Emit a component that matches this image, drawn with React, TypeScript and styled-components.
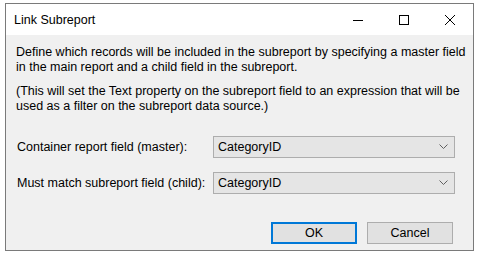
import React from 'react';
import styled, { createGlobalStyle } from 'styled-components';

const GlobalStyle = createGlobalStyle`
  html, body {
    margin: 0;
    padding: 0;
    background: #ffffff;
    font-family: 'Liberation Sans', Arial, sans-serif;
    font-size: 12.5px;
    color: #000000;
  }
`;

const Screen = styled.div`
  width: 479px;
  height: 256px;
  padding: 3px 0 0 5px;
  box-sizing: border-box;
  overflow: hidden;
`;

const Window = styled.div`
  width: 469px;
  height: 248px;
  box-sizing: border-box;
  border: 1px solid #7a7a7a;
  display: flex;
  flex-direction: column;
  background: #f0f0f0;
`;

const TitleBar = styled.div`
  height: 31px;
  background: #ffffff;
  display: flex;
  align-items: center;
  flex-shrink: 0;
`;

const Title = styled.div`
  flex: 1;
  padding-left: 8px;
`;

const CaptionButton = styled.div`
  width: 46px;
  height: 31px;
  display: flex;
  align-items: center;
  justify-content: center;
`;

const Body = styled.div`
  flex: 1;
  padding: 10px 10px 0 10px;
  display: flex;
  flex-direction: column;
`;

const Paragraph = styled.p`
  margin: 0 0 9px 0;
  line-height: 15px;
  white-space: nowrap;
`;

const FieldGrid = styled.div`
  margin-top: 13px;
  display: grid;
  grid-template-columns: 197px 242px;
  row-gap: 14px;
  align-items: center;
`;

const Label = styled.div`
  padding-left: 1px;
`;

const Combo = styled.div`
  height: 22px;
  box-sizing: border-box;
  border: 1px solid #adadad;
  background: #e5e5e5;
  display: flex;
  align-items: center;
  justify-content: space-between;
  padding: 0 6px 0 4px;
`;

const Footer = styled.div`
  margin-top: 28px;
  display: flex;
  justify-content: flex-end;
  gap: 10px;
  padding-right: 10px;
`;

const Button = styled.button<{ $default?: boolean }>`
  width: 86px;
  height: 22px;
  box-sizing: border-box;
  font: inherit;
  color: #000000;
  background: #e1e1e1;
  border: ${(p) => (p.$default ? '2px solid #0078d7' : '1px solid #adadad')};
  padding: 0;
`;

const Chevron = () => (
  <svg width="9" height="6" viewBox="0 0 9 6">
    <path d="M0.5 0.5 L4.5 4.5 L8.5 0.5" fill="none" stroke="#606060" strokeWidth="1" />
  </svg>
);

const App: React.FC = () => {
  return (
    <Screen>
      <GlobalStyle />
      <Window>
        <TitleBar>
          <Title>Link Subreport</Title>
          <CaptionButton>
            <svg width="10" height="10" viewBox="0 0 10 10">
              <path d="M0 5.5 H10" stroke="#000" strokeWidth="1" />
            </svg>
          </CaptionButton>
          <CaptionButton>
            <svg width="10" height="10" viewBox="0 0 10 10">
              <rect x="0.5" y="0.5" width="9" height="9" fill="none" stroke="#000" strokeWidth="1" />
            </svg>
          </CaptionButton>
          <CaptionButton>
            <svg width="10" height="10" viewBox="0 0 10 10">
              <path d="M0 0 L10 10 M10 0 L0 10" stroke="#000" strokeWidth="1" />
            </svg>
          </CaptionButton>
        </TitleBar>
        <Body>
          <Paragraph>
            Define which records will be included in the subreport by specifying a master field
            <br />
            in the main report and a child field in the subreport.
          </Paragraph>
          <Paragraph>
            (This will set the Text property on the subreport field to an expression that will be
            <br />
            used as a filter on the subreport data source.)
          </Paragraph>
          <FieldGrid>
            <Label>Container report field (master):</Label>
            <Combo>
              <span>CategoryID</span>
              <Chevron />
            </Combo>
            <Label>Must match subreport field (child):</Label>
            <Combo>
              <span>CategoryID</span>
              <Chevron />
            </Combo>
          </FieldGrid>
          <Footer>
            <Button $default>OK</Button>
            <Button>Cancel</Button>
          </Footer>
        </Body>
      </Window>
    </Screen>
  );
};

export default App;
